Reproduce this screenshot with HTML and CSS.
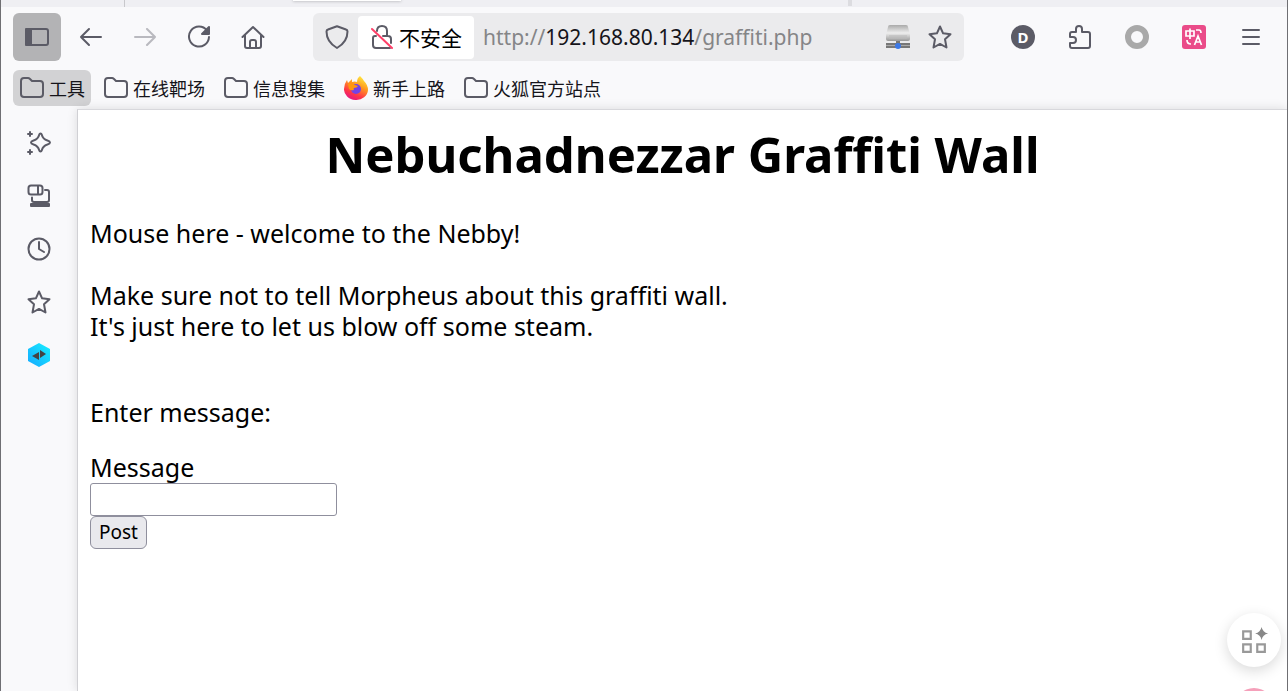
FILE: index.html
```
<!DOCTYPE html>
<html lang="zh-CN">
<head>
    <meta charset="UTF-8">
    <meta name="viewport" content="width=device-width, initial-scale=1.0">
    <title>Nebuchadnezzar Graffiti Wall</title>
    <link rel="stylesheet" href="styles.css">
</head>
<body>
    <div class="browser">
        <div class="tab-strip">
            <span class="tab-pinned"></span>
            <span class="tab-active"></span>
            <span class="tab-end"></span>
        </div>

        <!-- Navigation toolbar -->
        <div class="toolbar">
            <button class="tool-btn pressed" aria-label="侧栏">
                <svg class="icon" viewBox="0 0 24 24"><rect x="1" y="4" width="22" height="16" rx="2"/><path class="solid" d="M1 4h5v16H1z"/></svg>
            </button>
            <button class="tool-btn" aria-label="后退">
                <svg class="icon" viewBox="0 0 24 24"><path d="M22 12H2M10 4l-8 8 8 8"/></svg>
            </button>
            <button class="tool-btn" aria-label="前进" disabled>
                <svg class="icon" viewBox="0 0 24 24"><path d="M2 12h20M14 4l8 8-8 8"/></svg>
            </button>
            <button class="tool-btn" aria-label="刷新">
                <svg class="icon" viewBox="0 0 24 24"><path d="M20 5.500A10 10 0 1 0 22 12"/><path class="solid" d="M22 2v7h-7z"/></svg>
            </button>
            <button class="tool-btn" aria-label="主页">
                <svg class="icon" viewBox="0 0 24 24"><path d="M1.500 12 12 2l10.500 10M4 10v11q0 2 2 2h12q2 0 2-2V10M9 23v-6q0-2 2-2h2q2 0 2 2v6"/></svg>
            </button>

            <div class="urlbar">
                <button class="url-btn" aria-label="跟踪保护">
                    <svg class="icon" viewBox="0 0 24 24"><path d="M12 1.200 21 4.500q1.500.5 1.500 2Q22.500 17 12 23 1.500 17 1.500 6.500q0-1.500 1.500-2z"/></svg>
                </button>
                <button class="site-info">
                    <svg class="icon" viewBox="0 0 24 24"><path d="M6 11H5q-2 0-2 2v7q0 3 3 3h14M13 11h5q3 0 3 3v4M7 6q0-5 5-5t5 5v5"/><path class="strike" d="M2 4l20 19"/></svg>
                    不安全
                </button>
                <div class="address">http://<span class="host">192.168.80.134</span>/graffiti.php</div>
                <button class="url-btn" aria-label="代理">
                    <svg class="icon-color" viewBox="0 0 24 24">
                        <defs><linearGradient id="metal" x1="0" y1="0" x2="0" y2="1"><stop offset="0" stop-color="#aaa"/><stop offset=".5" stop-color="#eee"/><stop offset="1" stop-color="#999"/></linearGradient></defs>
                        <path d="M4 0h16q2 0 2 2l2 8v4q0 2-2 2H2q-2 0-2-2v-4l2-8q0-2 2-2z" fill="url(#metal)"/>
                        <path d="M3 11h18M3 13h18" stroke="#bbb"/>
                        <path d="M10 16h4v2h-4zM0 18h24v5H0z" fill="#777"/>
                        <path d="M0 20h24v1H0z" fill="#aaa"/>
                        <circle cx="12" cy="21" r="3" fill="#3b78e7"/>
                    </svg>
                </button>
                <button class="url-btn" aria-label="添加书签">
                    <svg class="icon" viewBox="0 0 24 24"><path d="M12 1.500l3.100 6.800 7.400.9-5.500 5 1.500 8.300-6.500-3.600-6.500 3.600L7 14.200l-5.500-5 7.400-.9z"/></svg>
                </button>
            </div>

            <div class="extensions">
                <button class="tool-btn" aria-label="账户"><span class="account">D</span></button>
                <button class="tool-btn" aria-label="扩展">
                    <svg class="icon" viewBox="0 0 24 24"><path d="M2 12V9q0-2 2-2h4V4q0-3 3-3t3 3v3h6q2 0 2 2v12q0 2-2 2H4q-2 0-2-2v-3h3q3 0 3-3t-3-3z"/></svg>
                </button>
                <button class="tool-btn" aria-label="代理开关"><span class="ring"></span></button>
                <button class="tool-btn" aria-label="翻译">
                    <svg class="icon-color" viewBox="0 0 24 24"><rect width="24" height="24" rx="3" fill="#ea4c89"/><path d="M4 6h8v5H4zM8 3.500V14M14 5h3q2 0 2 3M5 15q0 4 4 4M12.500 20l3.500-9 3.500 9M13.500 17h5" fill="none" stroke="#fff" stroke-width="1.700"/></svg>
                </button>
                <button class="tool-btn" aria-label="菜单">
                    <svg class="icon" viewBox="0 0 24 24"><path d="M4 5h16M4 12h16M4 19h16"/></svg>
                </button>
            </div>
        </div>

        <!-- Bookmarks -->
        <nav class="bookmarks">
            <a href="#" class="bookmark active">
                <svg class="icon" viewBox="0 0 24 24"><path d="M1 5q0-3 3-3h4q1 0 2 1l2 2h8q3 0 3 3v10q0 3-3 3H4q-3 0-3-3z"/></svg>
                工具
            </a>
            <a href="#" class="bookmark">
                <svg class="icon" viewBox="0 0 24 24"><path d="M1 5q0-3 3-3h4q1 0 2 1l2 2h8q3 0 3 3v10q0 3-3 3H4q-3 0-3-3z"/></svg>
                在线靶场
            </a>
            <a href="#" class="bookmark">
                <svg class="icon" viewBox="0 0 24 24"><path d="M1 5q0-3 3-3h4q1 0 2 1l2 2h8q3 0 3 3v10q0 3-3 3H4q-3 0-3-3z"/></svg>
                信息搜集
            </a>
            <a href="#" class="bookmark">
                <svg class="icon-color" viewBox="0 0 24 24">
                    <defs><linearGradient id="fire" x1=".8" y1="0" x2=".3" y2="1"><stop offset="0" stop-color="#fff044"/><stop offset=".4" stop-color="#ff9a1f"/><stop offset=".75" stop-color="#ff3647"/><stop offset="1" stop-color="#e31587"/></linearGradient></defs>
                    <path d="M16 0q3 3 4 5 4 4 4 9a12 10.500 0 0 1-24-1q0-5 3-9l1 3 4-4 0 3q3-1 5 0 0-4 3-6z" fill="url(#fire)"/>
                    <circle cx="12" cy="13" r="5" fill="#7542e5"/>
                    <path d="M4 8q4-2 7 1l3 1q-1 2-4 2-1 1 0 2-3 1-5-1z" fill="#ff980e"/>
                </svg>
                新手上路
            </a>
            <a href="#" class="bookmark">
                <svg class="icon" viewBox="0 0 24 24"><path d="M1 5q0-3 3-3h4q1 0 2 1l2 2h8q3 0 3 3v10q0 3-3 3H4q-3 0-3-3z"/></svg>
                火狐官方站点
            </a>
        </nav>

        <div class="main">
            <aside class="sidebar">
                <button class="tool-btn" aria-label="AI 聊天机器人">
                    <svg class="icon" viewBox="0 0 24 24"><path d="M13.500 2.500q1 0 1.300 1.200c.8 3.300 2 4.700 5.600 5.800q2.600.9 2.600 2t-2.600 2c-3.600 1.100-4.800 2.500-5.600 5.800q-.3 1.200-1.300 1.200t-1.300-1.200c-.8-3.300-2-4.700-5.600-5.800q-2.600-.9-2.600-2t2.600-2c3.600-1.100 4.800-2.500 5.600-5.800q.3-1.200 1.300-1.200zM3 1v4M1 3h4M3 19v4M1 21h4"/></svg>
                </button>
                <button class="tool-btn" aria-label="其他设备上的标签页">
                    <svg class="icon" viewBox="0 0 24 24"><rect x="1.500" y="1.500" width="14" height="9" rx="2.500"/><path d="M11 2v8M18 6h2q2 0 2 2v8q0 2-2 2H7q-2 0-2-2v-2.500"/><path class="solid" d="M4 20h18v2H4z"/></svg>
                </button>
                <button class="tool-btn" aria-label="历史">
                    <svg class="icon" viewBox="0 0 24 24"><circle cx="12" cy="12" r="10.500"/><path d="M12 5v7l5 3"/></svg>
                </button>
                <button class="tool-btn" aria-label="书签">
                    <svg class="icon" viewBox="0 0 24 24"><path d="M12 1.500l3.100 6.800 7.400.9-5.500 5 1.500 8.300-6.500-3.600-6.500 3.600L7 14.200l-5.500-5 7.400-.9z"/></svg>
                </button>
                <button class="tool-btn" aria-label="侧栏扩展">
                    <svg class="icon-color" viewBox="0 0 24 24">
                        <defs><linearGradient id="hex" x1="1" y1="0" x2="0" y2="1"><stop offset="0" stop-color="#18f0ff"/><stop offset="1" stop-color="#15a8ff"/></linearGradient></defs>
                        <path d="M12 0l11 6v12l-11 6-11-6V6z" fill="url(#hex)"/>
                        <path d="M5 13l7-4v8zM13 7l6 4-6 4z" fill="#444"/>
                    </svg>
                </button>
            </aside>

            <main class="page">
                <h1>Nebuchadnezzar Graffiti Wall</h1>
                <p>Mouse here - welcome to the Nebby!<br><br>Make sure not to tell Morpheus about this graffiti wall.<br>It's just here to let us blow off some steam.</p>
                <form class="message-form">
                    <p>Enter message:</p>
                    <label for="message">Message</label>
                    <input type="text" id="message" name="message">
                    <button type="submit">Post</button>
                </form>
            </main>
        </div>

        <div class="floating">
            <button class="float-btn" aria-label="快捷工具">
                <svg viewBox="0 0 24 24"><path d="M2 4h7v7H2zM2 16h7v7H2zM15 16h7v7h-7z" fill="none" stroke="#999" stroke-width="2"/><path d="M19 0q1 5 6 6-5 1-6 6-1-5-6-6 5-1 6-6z" fill="#888"/></svg>
            </button>
            <div class="float-next"><span></span></div>
        </div>
    </div>
</body>
</html>
```

FILE: styles.css
```
* {
    box-sizing: border-box;
}
body {
    margin: 0;
    font-family: "Noto Sans", "Noto Sans CJK SC", sans-serif;
    color: #000;
}
button {
    font-family: inherit;
    color: inherit;
}
.browser {
    position: relative;
    display: flex;
    flex-direction: column;
    height: 100vh;
    overflow: hidden;
    background-color: #f9f9fb;
    border-left: 1px solid #6f6f73;
    border-right: 1px solid #6f6f73;
}

/* Bottom edge of the tab strip */
.tab-strip {
    display: flex;
    flex: none;
    height: 7px;
    background-color: #efeff3;
}
.tab-pinned {
    width: 124px;
    border-right: 1px solid #c8c8cc;
}
.tab-active {
    width: 108px;
    height: 1px;
    margin-left: 168px;
    background-color: #fff;
    box-shadow: 0 0 3px rgba(0, 0, 0, 0.5);
}
.tab-end {
    width: 4px;
    height: 6px;
    margin-left: 447px;
    background-color: #dcdce0;
}

.icon {
    width: 24px;
    height: 24px;
    flex: none;
    fill: none;
    stroke: #5b5b66;
    stroke-width: 2;
    stroke-linecap: round;
    stroke-linejoin: round;
}
.icon .solid {
    fill: #5b5b66;
}
.icon .strike {
    stroke: #ff4069;
}
.icon-color {
    width: 24px;
    height: 24px;
    flex: none;
}

.toolbar {
    display: flex;
    align-items: center;
    flex: none;
    gap: 6px;
    height: 60px;
    padding: 0 12px;
}
.tool-btn {
    display: flex;
    align-items: center;
    justify-content: center;
    flex: none;
    width: 48px;
    height: 48px;
    padding: 0;
    border: none;
    border-radius: 6px;
    background: none;
}
.tool-btn.pressed {
    background-color: #b3b3b5;
}
.tool-btn:disabled {
    opacity: 0.4;
}
.urlbar {
    display: flex;
    align-items: center;
    flex: 1;
    min-width: 0;
    height: 48px;
    margin: 0 29px 0 30px;
    padding: 0 3px;
    border-radius: 6px;
    background-color: #ebebed;
}
.url-btn {
    display: flex;
    align-items: center;
    justify-content: center;
    flex: none;
    width: 42px;
    height: 42px;
    padding: 0;
    border: none;
    background: none;
}
.site-info {
    display: flex;
    align-items: center;
    flex: none;
    gap: 5px;
    height: 43px;
    padding: 0 12px;
    border: none;
    border-radius: 4px;
    background-color: #fff;
    font-size: 21px;
}
.address {
    flex: 1;
    min-width: 0;
    margin-left: 9px;
    overflow: hidden;
    white-space: nowrap;
    font-size: 21px;
    color: #858587;
}
.host {
    color: #15141a;
}
.extensions {
    display: flex;
    gap: 9px;
}
.account {
    width: 24px;
    height: 24px;
    border-radius: 50%;
    background-color: #5b5b66;
    color: #fff;
    font-size: 15px;
    font-weight: bold;
    line-height: 24px;
}
.ring {
    width: 24px;
    height: 24px;
    border: 6px solid #a9a9a9;
    border-radius: 50%;
}

.bookmarks {
    display: flex;
    flex: none;
    gap: 6px;
    height: 42px;
    padding: 3px 12px;
}
.bookmark {
    display: flex;
    align-items: center;
    gap: 5px;
    height: 36px;
    padding: 0 6px 0 7px;
    border-radius: 6px;
    color: #15141a;
    font-size: 18px;
    text-decoration: none;
    white-space: nowrap;
}
.bookmark.active {
    background-color: #d2d2d4;
}

.main {
    display: flex;
    flex: 1;
    min-height: 0;
}
.sidebar {
    display: flex;
    flex-direction: column;
    align-items: center;
    flex: none;
    gap: 5px;
    width: 76px;
    padding-top: 10px;
}
.page {
    flex: 1;
    min-width: 0;
    padding: 13px 12px;
    background-color: #fff;
    border-top: 1px solid #d8d8dc;
    border-left: 1px solid #d0d0d4;
    box-shadow: 0 0 10px rgba(0, 0, 0, 0.12);
    font-size: 25px;
    line-height: 31px;
}
.page h1 {
    margin: 0 0 32px;
    font-size: 49px;
    line-height: 63px;
    text-align: center;
}
.page p {
    margin: 0 0 24px;
}
.message-form {
    display: flex;
    flex-direction: column;
    align-items: flex-start;
    margin-top: 55px;
}
.message-form input {
    width: 247px;
    height: 33px;
    border: 1px solid #8f8f9d;
    border-radius: 3px;
    background-color: #fff;
    font-size: 19px;
}
.message-form button {
    height: 33px;
    padding: 0 8px;
    border: 1px solid #8f8f9d;
    border-radius: 6px;
    background-color: #e9e9ed;
    font-size: 19px;
    line-height: 31px;
}

/* Buttons floating over the page */
.floating {
    position: absolute;
    right: 6px;
    bottom: -30px;
    display: flex;
    flex-direction: column;
    gap: 14px;
}
.float-btn {
    width: 54px;
    height: 54px;
    padding: 14px;
    border: none;
    border-radius: 50%;
    background-color: #fff;
    box-shadow: 0 4px 14px rgba(0, 0, 0, 0.15);
}
.float-btn svg {
    display: block;
    width: 26px;
    height: 26px;
    overflow: visible;
}
.float-next {
    height: 40px;
    padding: 7px;
    background-color: #fff;
}
.float-next span {
    display: block;
    height: 40px;
    border-radius: 50%;
    background-color: #f5a0ba;
}
```
